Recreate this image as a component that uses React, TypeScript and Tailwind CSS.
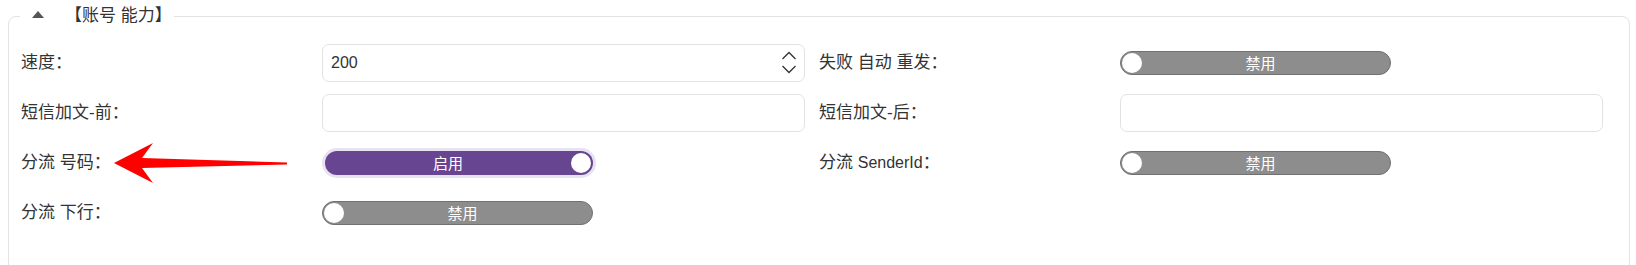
import React from "react";

const font = { fontFamily: '"Liberation Sans", "Noto Sans CJK SC", sans-serif' };

function Toggle({ on, label }: { on: boolean; label: string }) {
  if (on) {
    return (
      <div className="relative ml-[3px] flex h-[24px] w-[268px] items-center rounded-full bg-[#674591] pr-[22px] ring-[3px] ring-[#e8e1f1]">
        <span className="flex-1 text-center text-[15px] leading-none text-white">{label}</span>
        <span className="absolute right-[2px] top-[2px] h-[20px] w-[20px] rounded-full bg-white" />
      </div>
    );
  }
  return (
    <div className="relative flex h-[24px] w-[271px] items-center rounded-full border border-[#707070] bg-[#8d8d8d] pl-[10px]">
      <span className="flex-1 text-center text-[15px] leading-none text-white">{label}</span>
      <span className="absolute left-[1px] top-[1px] h-[20px] w-[20px] rounded-full bg-white" />
    </div>
  );
}

function TextBox({ value, spinner }: { value?: string; spinner?: boolean }) {
  return (
    <div className="flex h-[38px] w-[483px] items-center rounded-[7px] border border-[#e2e2e2] bg-white pl-[8px] pr-[7px] text-[16px] text-[#333]">
      <span className="flex-1">{value}</span>
      {spinner && (
        <svg width="16" height="26" viewBox="0 0 16 26">
          <path d="M1.5 9 L8 2.5 L14.5 9" fill="none" stroke="#333" strokeWidth="1.3" />
          <path d="M1.5 16 L8 22.5 L14.5 16" fill="none" stroke="#333" strokeWidth="1.3" />
        </svg>
      )}
    </div>
  );
}

function Label({ children }: { children: React.ReactNode }) {
  return <div className="text-[17px] text-[#333]">{children}</div>;
}

function Cell({ children }: { children: React.ReactNode }) {
  return <div className="relative flex h-[38px] items-center">{children}</div>;
}

export default function App() {
  return (
    <div className="relative bg-white" style={font}>
      <fieldset className="ml-[8px] mr-[6px] mt-[3px] rounded-[8px] border border-[#e3e3e3] pb-[60px] pl-[12px]">
        <legend className="ml-[-1px] flex h-[26px] items-center pl-[12px] pr-[2px] text-[17px] text-[#333]">
          <svg width="12" height="7" viewBox="0 0 12 7" className="mr-[21px] mt-[-4px]">
            <path d="M0 7 L6 0 L12 7 Z" fill="#555" />
          </svg>
          【账号 能力】
        </legend>
        <div className="mt-[15px] grid grid-cols-[301px_497px_301px_484px] items-center gap-y-[12px]">
          <Label>速度：</Label>
          <TextBox value="200" spinner />
          <Label>失败 自动 重发：</Label>
          <Cell>
            <Toggle on={false} label="禁用" />
          </Cell>

          <Label>短信加文-前：</Label>
          <TextBox />
          <Label>短信加文-后：</Label>
          <TextBox />

          <Label>分流 号码：</Label>
          <Cell>
            <Toggle on label="启用" />
          </Cell>
          <Label>
            分流 <span className="text-[16px]">SenderId</span>：
          </Label>
          <Cell>
            <Toggle on={false} label="禁用" />
          </Cell>

          <Label>分流 下行：</Label>
          <Cell>
            <Toggle on={false} label="禁用" />
          </Cell>
          <div />
          <div />
        </div>
      </fieldset>
      <svg
        width="180"
        height="44"
        viewBox="0 0 180 44"
        className="absolute left-[110px] top-[138px]"
      >
        <path d="M4 22 L43 2 L32 17 L177 21.5 L177 23.5 L32 27 L43 42 Z" fill="#ff0000" />
      </svg>
    </div>
  );
}
